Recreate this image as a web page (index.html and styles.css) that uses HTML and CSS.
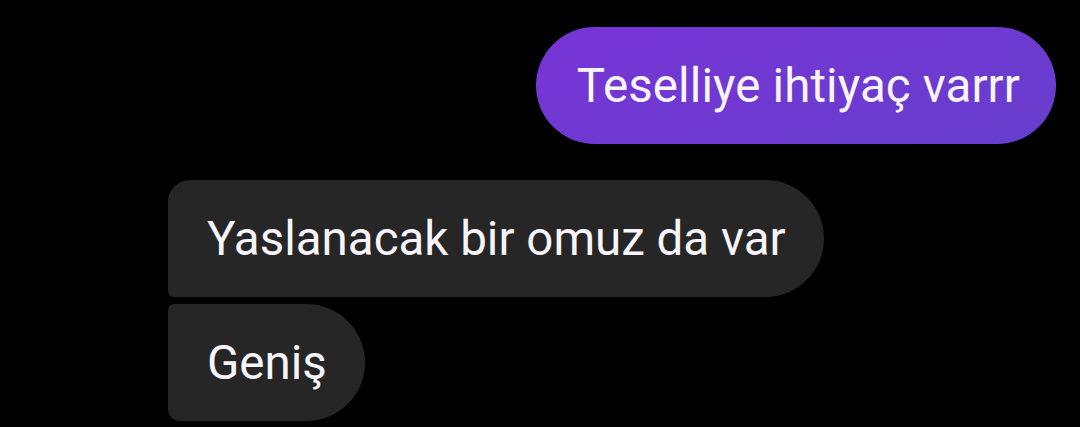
FILE: index.html
```html
<!DOCTYPE html>
<html lang="tr">
<head>
  <meta charset="UTF-8">
  <meta name="viewport" content="width=device-width, initial-scale=1">
  <title>Sohbet</title>
  <link rel="stylesheet" href="styles.css">
</head>
<body>
  <div class="chat">
    <div class="row row-out">
      <div class="bubble bubble-out">Teselliye ihtiyaç varrr</div>
    </div>
    <div class="group-in">
      <div class="bubble bubble-in first">Yaslanacak bir omuz da var</div>
      <div class="bubble bubble-in last">Geniş</div>
    </div>
  </div>
</body>
</html>
```
FILE: styles.css
```css
* {
  margin: 0;
  padding: 0;
  box-sizing: border-box;
}

body {
  background: #000;
  font-family: Roboto, 'Noto Sans', sans-serif;
  width: 1080px;
  height: 427px;
  overflow: hidden;
}

.chat {
  padding: 27px 24px 0 168px;
  display: flex;
  flex-direction: column;
}

.row-out {
  display: flex;
  justify-content: flex-end;
}

.bubble {
  height: 117px;
  display: flex;
  align-items: center;
  font-size: 47.5px;
  color: #f7f5fa;
  white-space: nowrap;
}

.bubble-out {
  padding: 0 36px 0 41px;
  border-radius: 59px;
  background: linear-gradient(160deg, #7834d6, #663ecd);
  letter-spacing: 0.1px;
}

.group-in {
  margin-top: 36px;
  display: flex;
  flex-direction: column;
  align-items: flex-start;
  gap: 7px;
}

.bubble-in {
  padding: 0 38px 0 39px;
  background: #262626;
}

.bubble-in.first {
  border-radius: 22px 59px 59px 6px;
}

.bubble-in.last {
  border-radius: 6px 59px 59px 12px;
}
```
